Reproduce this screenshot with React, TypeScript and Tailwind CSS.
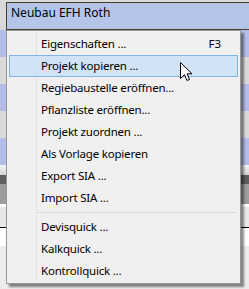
import React from "react";

type Item = { label: string; shortcut?: string; active?: boolean } | "sep";

const ITEMS: Item[] = [
  { label: "Eigenschaften ...", shortcut: "F3" },
  { label: "Projekt kopieren ...", active: true },
  { label: "Regiebaustelle eröffnen..." },
  { label: "Pflanzliste eröffnen..." },
  { label: "Projekt zuordnen ..." },
  { label: "Als Vorlage kopieren" },
  { label: "Export SIA ..." },
  { label: "Import SIA ..." },
  "sep",
  { label: "Devisquick ..." },
  { label: "Kalkquick ..." },
  { label: "Kontrollquick ..." },
];

function Cursor() {
  return (
    <svg width="13" height="20" viewBox="0 0 13 20" className="absolute left-[180px] top-[62px]">
      <path
        d="M0.5 0.5 L0.5 16.5 L4.5 12.7 L7 18.5 L9.5 17.4 L7.1 11.8 L12 11.8 Z"
        fill="#fff"
        stroke="#000"
        strokeWidth="1"
        strokeLinejoin="miter"
      />
    </svg>
  );
}

export default function App() {
  return (
    <div className="relative h-[289px] w-[249px] overflow-hidden bg-[#ececec] text-[11.5px] leading-[16px] text-black [font-family:'Noto_Sans',sans-serif]">
      {/* list rows behind the popup */}
      <div className="flex flex-col">
        <div className="h-[2px] bg-[#d9d9d9]" />
        <div className="flex h-[28px]">
          <div className="w-[6px] bg-[#d9d9d9]" />
          <div className="flex-1 border border-r-0 border-[#4b3d29] bg-[#b4c5e9] pl-[4px] pt-[2px] text-[12px]">
            Neubau EFH Roth
          </div>
        </div>
        <div className="h-[27px] bg-[#b4bde9]" />
        <div className="h-[27px] bg-[#d9d9d9]" />
        <div className="h-[27px] bg-[#b4bde9]" />
        <div className="h-[27px] bg-[#d9d9d9]" />
        <div className="h-[27px] bg-[#b4bde9]" />
        <div className="h-[10px] bg-gradient-to-b from-[#f4f4f4] to-[#d2d2d2]" />
        <div className="h-[9px] bg-[#5e5e5e]" />
        <div className="h-[20px] bg-[#9d9d9d]" />
        <div className="h-[3px] bg-white" />
        <div className="h-[20px] bg-[#e8e8e8]" />
        <div className="h-px bg-black" />
        <div className="h-[18px] bg-white" />
      </div>

      {/* context menu */}
      <div className="absolute left-[6px] top-[30px] w-[235px] border border-[#979797] bg-[#f0f0f0] pb-px pt-[2px] shadow-[3px_3px_2px_0_rgba(0,0,0,0.45)]">
        {ITEMS.map((it, i) =>
          it === "sep" ? (
            <div key={i} className="mx-[3px] flex h-[7px]">
              <div className="w-[27px] border-r border-[#e0e0e0]" />
              <div className="flex flex-1 items-center">
                <div className="mr-px h-px flex-1 bg-[#d7d7d7]" />
              </div>
            </div>
          ) : (
            <div
              key={i}
              className={
                it.active
                  ? "mx-[2px] flex h-[22px] items-center border border-[#84b4e6] bg-[#d1e3f5]"
                  : "mx-[2px] flex h-[22px] items-center border border-transparent"
              }
            >
              <div
                className={
                  it.active
                    ? "h-full w-[27px] border-r border-transparent"
                    : "h-full w-[27px] border-r border-[#e0e0e0]"
                }
              />
              <span className="flex-1 pl-[4px] tracking-[-0.2px]">{it.label}</span>
              {it.shortcut && <span className="pr-[16px]">{it.shortcut}</span>}
            </div>
          )
        )}
      </div>

      <Cursor />
    </div>
  );
}
